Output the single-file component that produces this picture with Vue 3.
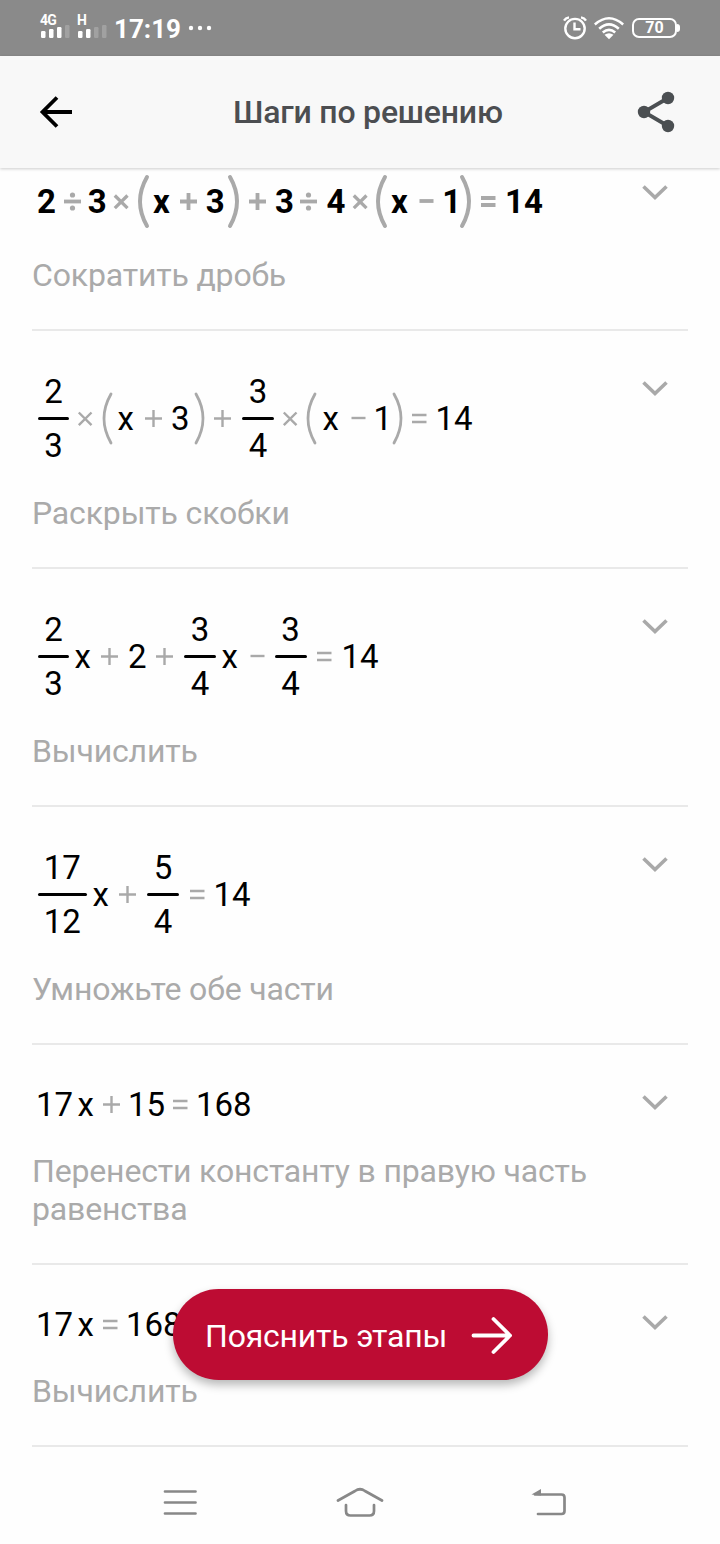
<script setup>
// Token: [kind, value, start]; each cell spans up to the start of the next token.
const bold = [
  ['t', '2', 37], ['o', '÷', 64], ['t', '3', 87.7], ['o', '×', 113.5], ['o', '(', 138], ['t', 'x', 153],
  ['o', '+', 180], ['t', '3', 205.7], ['o', ')', 228], ['o', '+', 249], ['t', '3', 275], ['o', '÷', 300],
  ['t', '4', 326.5], ['o', '×', 352], ['o', '(', 376], ['t', 'x', 391], ['o', '−', 419], ['t', '1', 442.3],
  ['o', ')', 460], ['o', '=', 481], ['t', '14', 505], ['e', '', 545],
]
const steps = [
  { size: 'paren', tokens: bold, label: 'Сократить дробь' },
  {
    size: 'frac', label: 'Раскрыть скобки',
    tokens: [
      ['f', '2/3', 38, 31], ['o', '×', 77], ['o', '(', 101.5], ['t', 'x', 117.5], ['o', '+', 145], ['t', '3', 171],
      ['o', ')', 193.5], ['o', '+', 214], ['f', '3/4', 242, 32], ['o', '×', 282], ['o', '(', 306], ['t', 'x', 322.5],
      ['o', '−', 350.5], ['t', '1', 373.5], ['o', ')', 391.5], ['o', '=', 412], ['t', '14', 435.5], ['e', '', 475],
    ],
  },
  {
    size: 'frac', label: 'Вычислить',
    tokens: [
      ['f', '2/3', 38, 31], ['t', 'x', 74.5], ['o', '+', 101], ['t', '2', 128], ['o', '+', 156], ['f', '3/4', 184, 32],
      ['t', 'x', 221.5], ['o', '−', 249.5], ['f', '3/4', 274.5, 32], ['o', '=', 317], ['t', '14', 341.5], ['e', '', 381],
    ],
  },
  {
    size: 'frac', label: 'Умножьте обе части',
    tokens: [
      ['f', '17/12', 38, 48.5], ['t', 'x', 92.5], ['o', '+', 119], ['f', '5/4', 147, 32], ['o', '=', 190],
      ['t', '14', 213.5], ['e', '', 253],
    ],
  },
  {
    size: 'plain', label: 'Перенести константу в правую часть равенства',
    tokens: [['t', '17', 36], ['t', 'x', 77.5], ['o', '+', 102.5], ['t', '15', 128], ['o', '=', 172.5], ['t', '168', 196], ['e', '', 255]],
  },
  {
    size: 'plain', label: 'Вычислить',
    tokens: [['t', '17', 36], ['t', 'x', 77.5], ['o', '=', 102.5], ['t', '168', 126], ['e', '', 185]],
  },
].map((s) => ({
  ...s,
  lead: s.tokens[0][2] - 32,
  cells: s.tokens.slice(0, -1).map((t, i) => ({
    kind: t[0], value: t[1], parts: t[1].split('/'), bar: t[3], width: s.tokens[i + 1][2] - t[2],
  })),
}))
const paths = {
  '+': 'M0 8.5H17M8.5 0V17',
  '−': 'M0.5 8H14.5',
  '=': 'M0 5H14.5M0 12H14.5',
  '×': 'M1.8 2.500L14.500 15.200M14.500 2.500L1.800 15.200',
  '÷': 'M0 8.5H17',
}
</script>

<template>
  <div class="screen">
    <div class="status">
      <div class="network">
        <span>4G</span>
        <svg width="30" height="14" viewBox="0 0 30 14" fill="#fff">
          <rect x="1" y="6" width="4.500" height="7" rx="1.200" /><rect x="9" y="4" width="4.500" height="9" rx="1.200" />
          <rect x="17" y="2" width="4.500" height="11" rx="1.200" /><rect x="25" y="0" width="4.500" height="13" rx="1.200" opacity=".2" />
        </svg>
      </div>
      <div class="network">
        <span>H</span>
        <svg width="30" height="14" viewBox="0 0 30 14" fill="#fff">
          <rect x="1" y="6" width="4.500" height="7" rx="1.200" /><rect x="9" y="4" width="4.500" height="9" rx="1.200" />
          <rect x="17" y="2" width="4.500" height="11" rx="1.200" opacity=".2" /><rect x="25" y="0" width="4.500" height="13" rx="1.200" opacity=".2" />
        </svg>
      </div>
      <span class="clock">17:19</span>
      <svg class="dots" width="24" height="6" fill="#fff"><circle cx="3" cy="3" r="2.2" /><circle cx="12" cy="3" r="2.2" /><circle cx="21" cy="3" r="2.2" /></svg>
      <svg class="alarm" width="24" height="24" viewBox="0 0 24 24" fill="none" stroke="#fff" stroke-width="2.4">
        <circle cx="12" cy="12.6" r="9.7" /><path d="M11.5 6.5V13.3H17.5M1 4.6Q2.5 2 6 1.4M23 4.6Q21.5 2 18 1.4" />
      </svg>
      <svg class="wifi" width="30" height="24" viewBox="0 0 30 24" fill="none" stroke="#fff" stroke-width="2.6">
        <path d="M.8 8.5Q15-4 29.200 8.500M5.200 12.800Q15 4 24.800 12.800M8.800 16.600Q15 11.200 21.200 16.600" />
        <path d="M10.500 18.800Q15 15.500 19.500 18.800L15 23.300Z" fill="#fff" stroke="none" />
      </svg>
      <div class="battery">70</div><i class="cap"></i>
    </div>

    <header class="bar">
      <svg class="back" width="34" height="34" viewBox="0 0 34 34" fill="none" stroke="#000" stroke-width="3.800">
        <path d="M33 17H4M18 2.500L3.500 17L18 31.500" />
      </svg>
      <h1>Шаги по решению</h1>
      <svg class="share" width="38" height="42" viewBox="0 0 38 42" fill="#4b4f52">
        <path d="M31 7L7 21L31 35" fill="none" stroke="#4b4f52" stroke-width="3.800" />
        <circle cx="31" cy="7" r="6.200" /><circle cx="7" cy="21" r="6.200" /><circle cx="31" cy="35" r="6.200" />
      </svg>
    </header>

    <main class="steps">
      <section v-for="(s, i) in steps" :key="i" class="step" :class="s.size">
        <div class="body">
          <div class="equation" :style="{ paddingLeft: s.lead + 'px' }">
            <div v-for="(c, j) in s.cells" :key="j" class="cell" :style="{ width: c.width + 'px' }">
              <span v-if="c.kind === 't'" class="term">{{ c.value }}</span>
              <span v-else-if="c.kind === 'f'" class="fraction" :style="{ width: c.bar + 'px' }">
                <span>{{ c.parts[0] }}</span><i></i><span>{{ c.parts[1] }}</span>
              </span>
              <svg v-else-if="c.value === '(' || c.value === ')'" class="bracket" width="11" height="55" viewBox="0 0 11 55">
                <path :d="c.value === '(' ? 'M9 3Q-5 27.500 9 52' : 'M2 3Q16 27.500 2 52'" />
              </svg>
              <svg v-else class="op" :class="{ times: c.value === '×' }" width="17" height="17" viewBox="0 0 17 17">
                <path :d="paths[c.value]" />
                <template v-if="c.value === '÷'"><circle cx="8.500" cy="2" r="2.600" /><circle cx="8.500" cy="15" r="2.600" /></template>
              </svg>
            </div>
          </div>
          <p>{{ s.label }}</p>
        </div>
        <svg class="chevron" width="28" height="16" viewBox="0 0 28 16"><path d="M2.500 2.500L14 13.500L25.500 2.500" /></svg>
      </section>
    </main>

    <button class="explain">
      <span>Пояснить этапы</span>
      <svg width="42" height="40" viewBox="0 0 42 40" fill="none" stroke="#fff" stroke-width="3.800" stroke-linecap="round" stroke-linejoin="round">
        <path d="M3.500 20.500H40M23.500 4L40 20.500L23.500 37" />
      </svg>
    </button>

    <nav class="nav">
      <svg width="34" height="28" viewBox="0 0 34 28"><path d="M2 2.500H32.500M2 13.500H32.500M2 24.500H32.500" /></svg>
      <svg class="home" width="50" height="32" viewBox="0 0 50 32"><path d="M3 14.500L20 5Q25 1.500 30 5L47 14.500M11 19V25Q11 29.500 15.500 29.500H34.500Q39 29.500 39 25V19" /></svg>
      <svg width="36" height="30" viewBox="0 0 36 30"><path d="M4 6.500H30.500Q33.500 6.500 33.500 9.500V23Q33.500 26 30.500 26H7" /><path class="tip" d="M.5 6.500L10 1V7.500Z" /></svg>
    </nav>
  </div>
</template>

<style>
body { background: #fefefe; }
</style>
<style scoped>
.screen { position: relative; width: 720px; height: 1544px; overflow: hidden; background: #fefefe; font-family: Roboto, "Noto Sans", sans-serif; display: flex; flex-direction: column; }
.status { position: relative; z-index: 2; height: 56px; flex: none; box-sizing: border-box; background: #8a8a8a; color: #fff; display: flex; align-items: center; padding-left: 40px; }
.network { width: 37px; height: 26px; margin-top: -3px; display: flex; flex-direction: column; }
.network span { font-size: 14px; font-weight: 700; line-height: 12px; height: 12px; letter-spacing: -0.8px; }
.network svg { flex: none; margin-top: -1px; }
.clock { font-size: 26px; font-weight: 700; line-height: 32px; width: 72px; margin-top: 2px; }
.dots { margin-left: 2px; }
.alarm { margin-left: 351px; }
.wifi { margin-left: 7px; }
.battery { box-sizing: border-box; width: 45px; height: 20px; margin-left: 8px; border: 2px solid #fff; border-radius: 7px; font-size: 16px; font-weight: 700; line-height: 16px; text-align: center; }
.cap { width: 3px; height: 8px; background: #fff; border-radius: 0 3px 3px 0; }
.bar { position: relative; z-index: 2; height: 112px; flex: none; background: #f8f8f8; display: flex; align-items: center; box-shadow: 0 1px 3px rgba(0, 0, 0, .2); padding-left: 39px; }
.back { flex: none; }
h1 { margin: 0 0 0 160px; width: 280px; font-size: 32px; line-height: 38px; font-weight: 500; color: #4c4e51; white-space: nowrap; letter-spacing: -0.2px; }
.share { margin-left: 124px; }
.steps { margin-top: -33px; padding: 0 32px; }
.step { display: flex; justify-content: space-between; box-sizing: border-box; padding: 32px 0 35px; border-bottom: 2px solid #e9e9e9; }
.body { width: 580px; }
.equation { display: flex; align-items: center; color: #000; font-size: 33px; line-height: 38px; height: 55px; }
.paren .equation { height: 69px; font-weight: 700; }
.frac .equation { height: 111px; }
.cell { flex: none; display: flex; align-items: center; white-space: nowrap; }
.term { flex: none; }
.op, .bracket { flex: none; overflow: visible; fill: none; stroke: #a9a9a9; stroke-width: 2.4; }
.op circle { fill: #a9a9a9; stroke: none; }
.bracket { stroke-width: 2.8; stroke-linecap: round; }
.paren .op { stroke-width: 3.8; }
.paren .op.times { stroke-width: 3.3; }
.paren .bracket { stroke-width: 4; }
.fraction { display: flex; flex-direction: column; align-items: center; }
.fraction span { height: 38px; }
.fraction i { width: 100%; height: 3px; margin: 6.5px 0; border-radius: 2px; background: #000; }
p { margin: 20px 0 0; font-size: 32px; line-height: 38px; color: #aaa; letter-spacing: -0.16px; }
.chevron { flex: none; margin: 17px 19.5px 0 0; fill: none; stroke: #a9a9a9; stroke-width: 3.6; }
.explain { position: absolute; left: 173px; top: 1289px; width: 375px; height: 91px; border: 0; border-radius: 46px; background: #bd0c33; box-shadow: 0 5px 10px rgba(0, 0, 0, .28); display: flex; align-items: center; padding: 2px 0 0 32px; color: #fff; font: 400 32px/38px Roboto, sans-serif; }
.explain span { width: 265px; text-align: left; white-space: nowrap; letter-spacing: -0.2px; }
.explain svg { margin-top: -2px; flex: none; }
.nav { flex: 1; display: flex; align-items: center; padding: 14px 153px 0 163px; }
.nav svg { fill: none; stroke: #888; stroke-width: 2.7; stroke-linecap: round; }
.nav .home { margin: 0 146px 0 138px; margin-top: -2px; }
.nav .tip { fill: #888; stroke: none; }
</style>
